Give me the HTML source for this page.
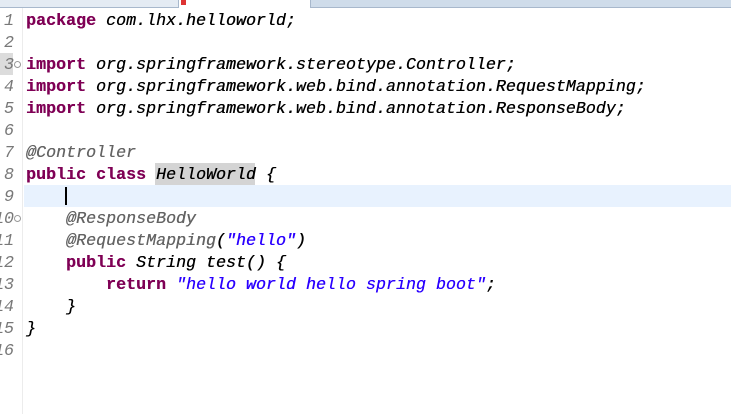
<!DOCTYPE html>
<html><head><style>
body{margin:0;width:731px;height:414px;overflow:hidden;background:#fff;position:relative;font-family:"Liberation Mono",monospace;}
.tabs{position:absolute;top:0;left:0;width:731px;height:7px;background:#cfdcea;border-bottom:1px solid #a8b8cc;}
.t1{position:absolute;left:0;top:0;width:178px;height:7px;background:#e4ebf3;border-right:1px solid #a8b8cc;}
.t2{position:absolute;left:179px;top:0;width:131px;height:8px;background:#fff;border-right:1px solid #a8b8cc;}
.gut{position:absolute;left:0;top:8px;width:22px;height:406px;border-right:1px solid #ececec;}
.hl{position:absolute;left:24px;top:185px;width:707px;height:22px;background:#e8f2fe;}
.row{position:absolute;left:0;width:731px;height:22px;line-height:26px;font-size:16.67px;font-style:italic;white-space:pre;}
.n{position:absolute;left:0;width:14px;color:#787878;text-align:right;}
.n2{left:-6px;width:20px;}
.c{position:absolute;left:26px;color:#000;text-shadow:0.3px 0 0 currentColor;}
.k{color:#7f0055;font-weight:bold;font-style:normal;}
.s{color:#2a00ff;}
.a{color:#646464;}
.fold{position:absolute;left:14px;width:5px;height:5px;border:1px solid #999;border-radius:50%;font-size:0;}
</style></head><body>
<div class="tabs"></div><div class="t1"></div><div class="t2"><div style="position:absolute;left:2px;top:0;width:5px;height:5px;background:#d33"></div></div>
<div class="gut"></div>
<div style="position:absolute;left:0;top:53px;width:13px;height:22px;background:#dcdcdc"></div>
<div class="hl"></div>
<div style="position:absolute;left:155px;top:163px;width:100px;height:22px;background:#d4d4d4"></div>
<div style="position:absolute;left:65px;top:187px;width:2px;height:18px;background:#000"></div>
<div class="fold" style="top:61px"></div><div class="fold" style="top:215px"></div>
<div class="row" style="top:9px"><span class="n">1</span><span class="c"><span class="k">package</span> com.lhx.helloworld;</span></div>
<div class="row" style="top:31px"><span class="n">2</span></div>
<div class="row" style="top:53px"><span class="n">3</span><span class="c"><span class="k">import</span> org.springframework.stereotype.Controller;</span></div>
<div class="row" style="top:75px"><span class="n">4</span><span class="c"><span class="k">import</span> org.springframework.web.bind.annotation.RequestMapping;</span></div>
<div class="row" style="top:97px"><span class="n">5</span><span class="c"><span class="k">import</span> org.springframework.web.bind.annotation.ResponseBody;</span></div>
<div class="row" style="top:119px"><span class="n">6</span></div>
<div class="row" style="top:141px"><span class="n">7</span><span class="c"><span class="a">@Controller</span></span></div>
<div class="row" style="top:163px"><span class="n">8</span><span class="c"><span class="k">public</span> <span class="k">class</span> HelloWorld {</span></div>
<div class="row" style="top:185px"><span class="n">9</span></div>
<div class="row" style="top:207px"><span class="n n2">10</span><span class="c">    <span class="a">@ResponseBody</span></span></div>
<div class="row" style="top:229px"><span class="n n2">11</span><span class="c">    <span class="a">@RequestMapping</span>(<span class="s">"hello"</span>)</span></div>
<div class="row" style="top:251px"><span class="n n2">12</span><span class="c">    <span class="k">public</span> String test() {</span></div>
<div class="row" style="top:273px"><span class="n n2">13</span><span class="c">        <span class="k">return</span> <span class="s">"hello world hello spring boot"</span>;</span></div>
<div class="row" style="top:295px"><span class="n n2">14</span><span class="c">    }</span></div>
<div class="row" style="top:317px"><span class="n n2">15</span><span class="c">}</span></div>
<div class="row" style="top:339px"><span class="n n2">16</span></div>
</body></html>
